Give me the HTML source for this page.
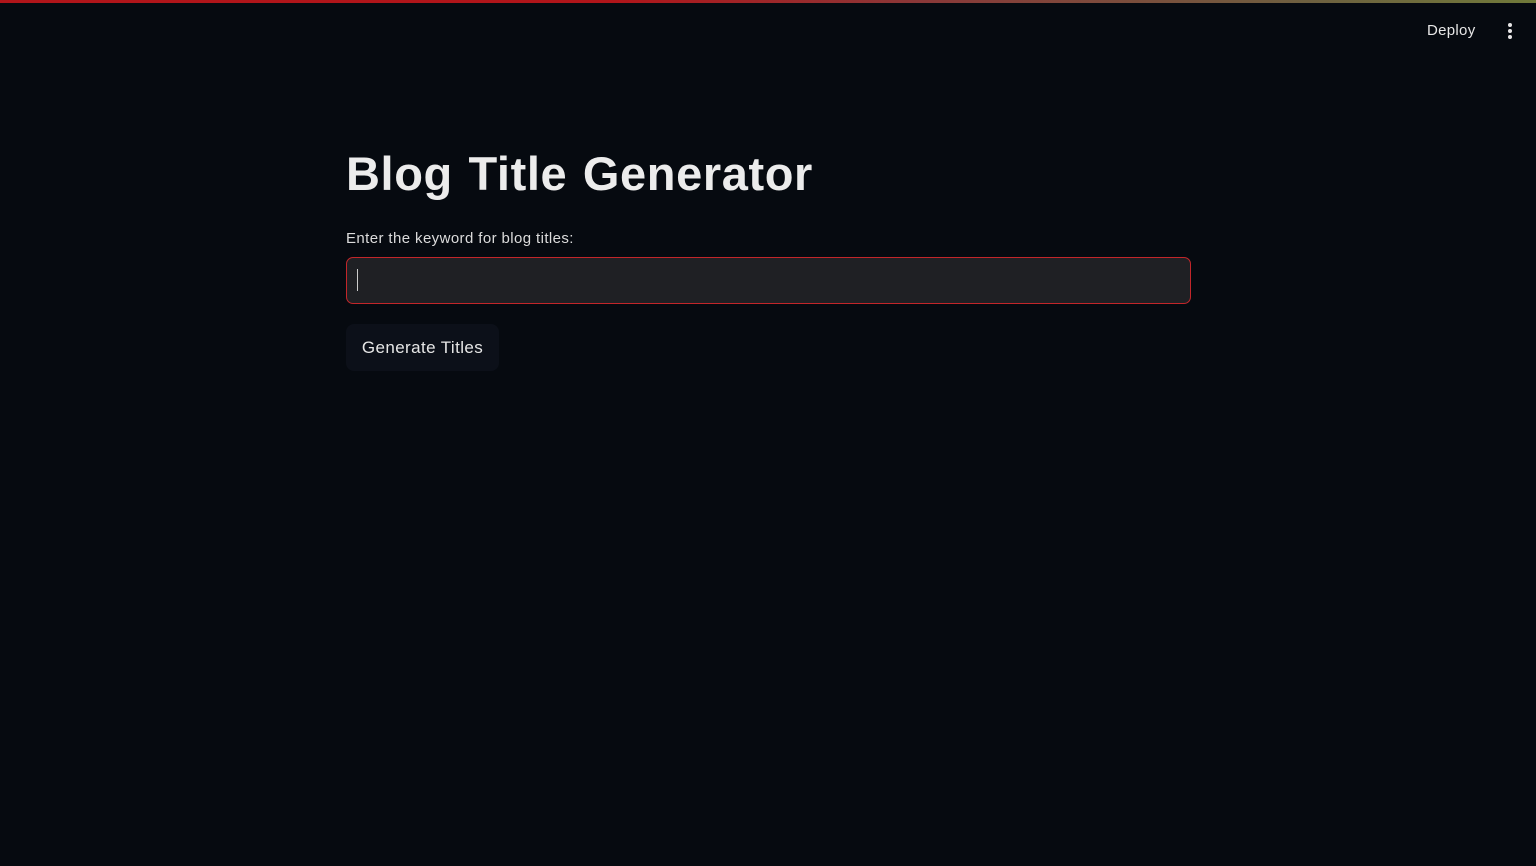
<!DOCTYPE html>
<html><head><style>
html,body{margin:0;padding:0;width:1536px;height:866px;overflow:hidden;background:#060a10;font-family:"Liberation Sans",sans-serif;}
.bar{position:absolute;top:0;left:0;width:1536px;height:3px;background:linear-gradient(90deg,#b0151a 0%,#b0151a 40%,#8a3838 60%,#6e6040 85%,#707a3a 100%);}
.deploy{position:absolute;left:1427px;top:22px;color:#e6e6e6;font-size:15px;letter-spacing:0.3px;}
.dots{position:absolute;left:1508px;top:23px;width:4px;}
.dots i{display:block;width:4px;height:4px;border-radius:2px;background:#e6e6e6;margin-bottom:2px;}
h1{position:absolute;left:346px;top:146px;margin:0;color:#ececec;font-size:47px;font-weight:bold;letter-spacing:0.6px;word-spacing:2px;}
.label{position:absolute;left:346px;top:230px;color:#dcdcdc;font-size:15px;letter-spacing:0.4px;}
.input{position:absolute;left:346px;top:257px;width:843px;height:45px;border:1px solid #c2262a;border-radius:7px;background:#1f2024;}
.caret{position:absolute;left:10px;top:11px;width:1px;height:22px;background:#ccc;}
.btn{position:absolute;left:346px;top:324px;width:153px;height:47px;border-radius:8px;background:#0c1019;color:#e6e6e6;font-size:17px;line-height:47px;text-align:center;letter-spacing:0.4px;}
</style></head><body>
<div class="bar"></div>
<div class="deploy">Deploy</div>
<div class="dots"><i></i><i></i><i></i></div>
<h1>Blog Title Generator</h1>
<div class="label">Enter the keyword for blog titles:</div>
<div class="input"><div class="caret"></div></div>
<div class="btn">Generate Titles</div>
</body></html>
